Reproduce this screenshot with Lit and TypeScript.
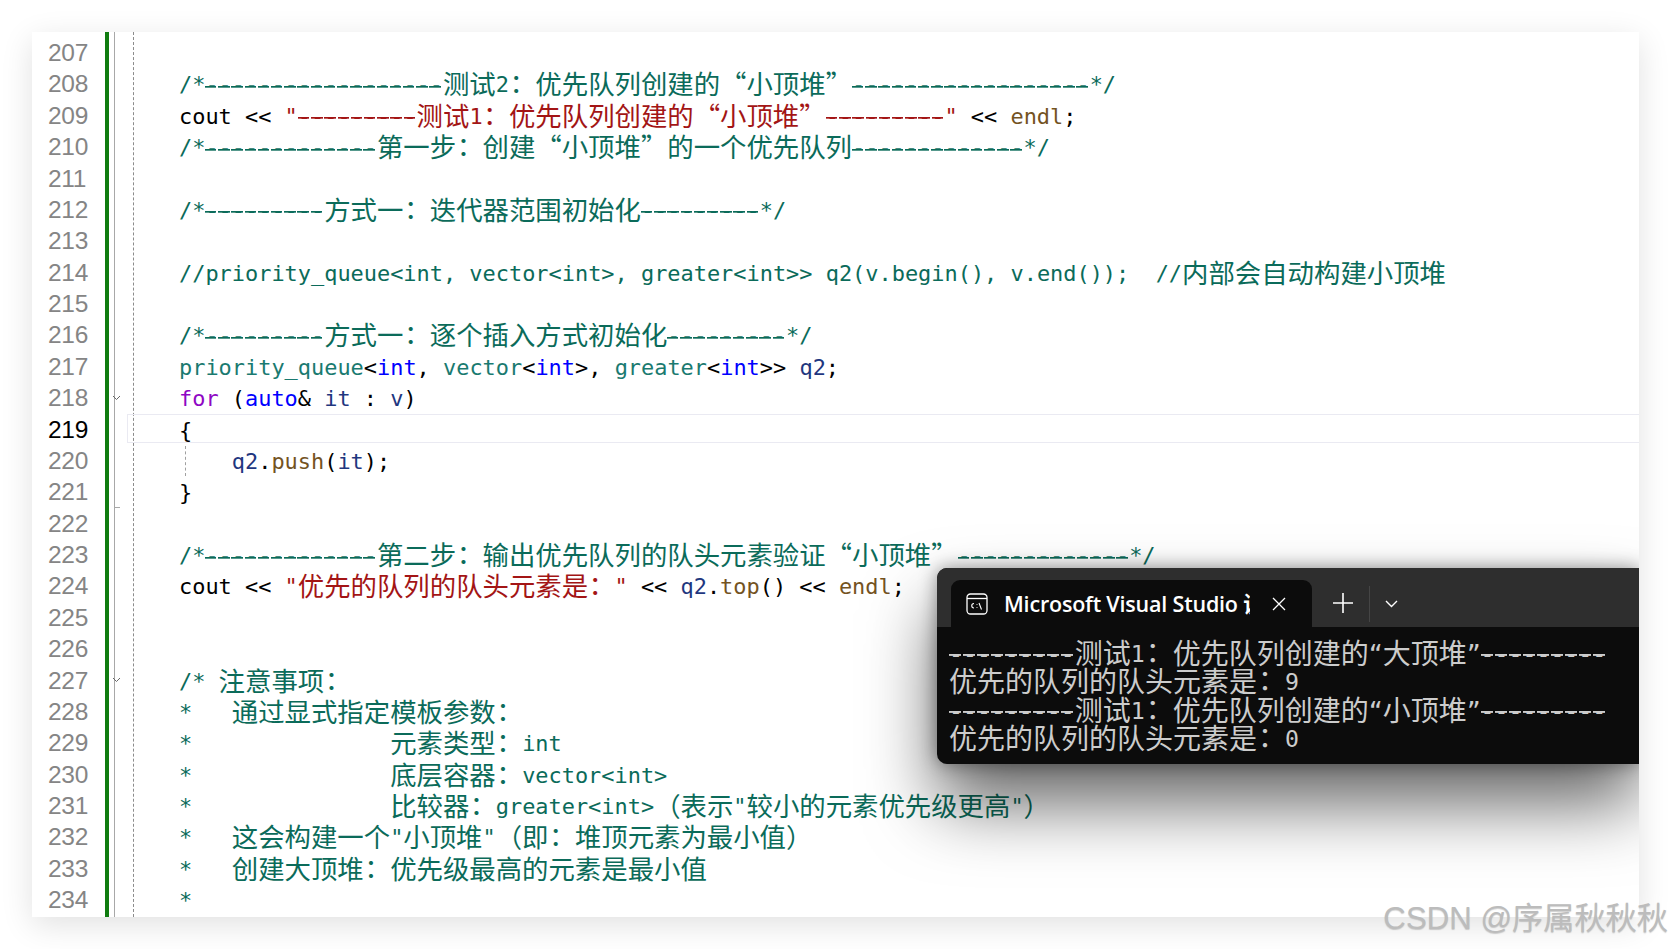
import { LitElement, html, css, svg } from "lit";
import { customElement } from "lit/decorators.js";

type Seg = [string, string];
const c = (t: string): Seg[] => [["cm", t]];
const D9 = "---------", D13 = "-------------", D18 = "------------------";

const LINES: Seg[][] = [
  [],
  c(`/*${D18}测试2：优先队列创建的“小顶堆”${D18}*/`),
  [["tx", "cout << "], ["st", `"${D9}测试1：优先队列创建的“小顶堆”${D9}"`], ["tx", " << "], ["fn", "endl"], ["tx", ";"]],
  c(`/*${D13}第一步：创建“小顶堆”的一个优先队列${D13}*/`),
  [],
  c(`/*${D9}方式一：迭代器范围初始化${D9}*/`),
  [],
  c("//priority_queue<int, vector<int>, greater<int>> q2(v.begin(), v.end());  //内部会自动构建小顶堆"),
  [],
  c(`/*${D9}方式一：逐个插入方式初始化${D9}*/`),
  [["ty", "priority_queue"], ["tx", "<"], ["kw", "int"], ["tx", ", "], ["ty", "vector"], ["tx", "<"], ["kw", "int"], ["tx", ">, "], ["ty", "greater"], ["tx", "<"], ["kw", "int"], ["tx", ">> "], ["va", "q2"], ["tx", ";"]],
  [["fl", "for"], ["tx", " ("], ["kw", "auto"], ["tx", "& "], ["va", "it"], ["tx", " : "], ["va", "v"], ["tx", ")"]],
  [["tx", "{"]],
  [["tx", "    "], ["va", "q2"], ["tx", "."], ["fn", "push"], ["tx", "("], ["va", "it"], ["tx", ");"]],
  [["tx", "}"]],
  [],
  c(`/*${D13}第二步：输出优先队列的队头元素验证“小顶堆”${D13}*/`),
  [["tx", "cout << "], ["st", `"优先的队列的队头元素是："`], ["tx", " << "], ["va", "q2"], ["tx", "."], ["fn", "top"], ["tx", "() << "], ["fn", "endl"], ["tx", ";"]],
  [],
  [],
  c("/* 注意事项："),
  c("*   通过显式指定模板参数："),
  c("*               元素类型：int"),
  c("*               底层容器：vector<int>"),
  c('*               比较器：greater<int>（表示"较小的元素优先级更高"）'),
  c('*   这会构建一个"小顶堆"（即：堆顶元素为最小值）'),
  c("*   创建大顶堆：优先级最高的元素是最小值"),
  c("*"),
];

const TERM = [
  `${D9}测试1：优先队列创建的“大顶堆”${D9}`,
  "优先的队列的队头元素是：9",
  `${D9}测试1：优先队列创建的“小顶堆”${D9}`,
  "优先的队列的队头元素是：0",
];

function runs(text: string, quotesWide: boolean) {
  const re = quotesWide
    ? /(-{2,})|(：)|([^\x00-\x7f：]+)|([\x00-\x7f]+?(?=-{2,}|[^\x00-\x7f]|$))/g
    : /(-{2,})|(：)|([^\x00-\x7f：“”]+)|((?:[\x00-\x7f“”])+?(?=-{2,}|[^\x00-\x7f“”]|$))/g;
  const out: unknown[] = [];
  for (const m of text.matchAll(re)) {
    if (m[1]) out.push(html`<span class="d">${m[1]}</span>`);
    else if (m[2]) out.push(html`<span class="p">${m[2]}</span>`);
    else if (m[3]) out.push(html`<span class="h">${m[3]}</span>`);
    else out.push(m[4]);
  }
  return out;
}

@customElement("app-root")
export class AppRoot extends LitElement {
  static styles = css`
    :host { display: block; width: 1671px; height: 949px; position: relative; overflow: hidden; background: #fff; }
    .page { padding: 32px; box-sizing: border-box; height: 949px; }
    .card { position: relative; height: 885px; overflow: hidden; background: #fff; display: flex; }
    .shadow { box-shadow: 0 8px 30px rgba(0,0,0,.12); }
    .nums { width: 73px; padding: 5px 0 0 16px; box-sizing: border-box; flex: none;
      font: 24.5px/31.39px "Liberation Sans", sans-serif; letter-spacing: -.3px; color: #858585; }
    .nums div { height: 31.39px; }
    .nums .cur { color: #000; }
    .green { width: 4px; flex: none; background: #107c10; }
    .margin { width: 20px; flex: none; margin-left: 5px; border-left: 1px solid #a8a8a8; box-sizing: border-box; border-right: 1px dashed #8c8c8c; position: relative; }
    .fold { position: absolute; left: -3px; width: 9px; height: 9px; color: #666; }
    .tick { position: absolute; left: 0; width: 5px; height: 1px; background: #a8a8a8; top: 475px; }
    .code { flex: 1; padding: 6px 0 0 45px; font: 21.93px/31.39px "DejaVu Sans Mono", monospace; color: #000; min-width: 0; position: relative; }
    .line { height: 31.39px; white-space: pre; }
    .h { font: 26.4px/0 "Noto Sans CJK SC", sans-serif; font-feature-settings: "fwid"; position: relative; top: 2px; }
    .p { font: 26.4px/0 "Noto Sans CJK TC", sans-serif; position: relative; left: -6px; top: 2px; }
    .d { background-image: repeating-linear-gradient(90deg, currentColor 0 11.4px, transparent 11.4px 13.2px);
      background-size: 100% 1.7px; background-repeat: no-repeat; background-position: 0 13.5px; }
    .cm { color: #0b6b5a; }
    .tx { color: #000; }
    .st { color: #a31515; }
    .kw { color: #0000ff; }
    .fl { color: #8f08c4; }
    .ty { color: #1a7a70; }
    .va { color: #1f377f; }
    .fn { color: #74531f; }
    .current { position: absolute; left: 95px; right: 0; top: 382px; height: 29px; box-sizing: border-box;
      border: 1px solid #eaeaf2; border-right: 0; }
    .guide { position: absolute; left: 153px; top: 414px; height: 30px; border-left: 1px dashed #a0a0a0; }
    .term { position: absolute; left: 905px; right: 0; top: 536px; height: 196px; border-radius: 10px 0 0 10px;
      background: #0c0c0c; box-shadow: 0 40px 70px rgba(0,0,0,.6), 0 0 18px rgba(0,0,0,.4); display: flex; flex-direction: column; }
    .strip { height: 59px; flex: none; background: #2e2e2e; border-radius: 10px 0 0 0; padding: 12px 0 0 14px; box-sizing: border-box;
      display: flex; align-items: stretch; color: #fff; }
    .tab { width: 361px; background: #0c0c0c; border-radius: 9px 9px 0 0; display: flex; align-items: center; padding: 0 0 0 15px; box-sizing: border-box; }
    .ticon { width: 22px; height: 22px; flex: none; }
    .title { width: 246px; margin-left: 16px; overflow: hidden; white-space: nowrap; flex: none;
      font: 600 21.5px/30px "Open Sans", "Noto Sans CJK SC", sans-serif; letter-spacing: -.2px; }
    .x { width: 14px; height: 14px; margin-left: 22px; flex: none; }
    .plus { width: 20px; height: 20px; margin: 13px 0 0 21px; flex: none; }
    .div { width: 1px; height: 36px; background: #454545; margin: 6px 0 0 16px; flex: none; }
    .chev { width: 13px; height: 8px; margin: 20px 0 0 15px; flex: none; }
    .tbody { padding: 13px 0 0 12px; font: 23.2px/28.3px "DejaVu Sans Mono", monospace; color: #cccccc; }
    .tbody div { height: 28.3px; white-space: pre; }
    .tbody .h, .tbody .p { font-size: 28px; line-height: 0; font-feature-settings: normal; }
    .tbody .d { background-image: repeating-linear-gradient(90deg, currentColor 0 12px, transparent 12px 14px);
      background-size: 100% 1.9px; background-position: 0 14.2px; }
    .mark { position: absolute; right: 3px; top: 898px; white-space: nowrap; color: #bcbcbc;
      font: 31.2px/42px "Liberation Sans", "Noto Sans CJK SC", sans-serif; text-shadow: 0 1px 1px rgba(120,120,120,.35); }
  `;

  render() {
    const chevron = (top: number) => svg`<svg class="fold" style="top:${top}px" viewBox="0 0 9 9" fill="none" stroke="currentColor"><path d="M1 3l3.5 3.5L8 3"/></svg>`;
    return html`
      <div class="page">
        <div class="card-wrap shadow">
          <div class="card">
            <div class="nums">${LINES.map((_, i) => html`<div class=${i + 207 === 219 ? "cur" : ""}>${i + 207}</div>`)}</div>
            <div class="green"></div>
            <div class="margin">
              ${chevron(361)}${chevron(643)}
              <div class="tick"></div>
            </div>
            <div class="code">
              ${LINES.map((l) => html`<div class="line">${l.map(([k, t]) => html`<span class=${k}>${runs(t, true)}</span>`)}</div>`)}
            </div>
            <div class="current"></div>
            <div class="guide"></div>
            <div class="term">
              <div class="strip">
                <div class="tab">
                  <svg class="ticon" viewBox="0 0 22 22" fill="none" stroke="#fff" stroke-width="1.3">
                    <rect x="1" y="1" width="20" height="20" rx="3.5"/>
                    <path d="M1 5.5h20"/>
                    <path d="M8 10.5a2.2 2.2 0 1 0 0 4.5M11 11v.8M11 14v.8M13 10l2.5 6.5" stroke-width="1.1"/>
                  </svg>
                  <div class="title">Microsoft Visual Studio 调试控制台</div>
                  <svg class="x" viewBox="0 0 14 14" stroke="#fff" stroke-width="1.3"><path d="M1 1l12 12M13 1L1 13"/></svg>
                </div>
                <svg class="plus" viewBox="0 0 20 20" stroke="#fff" stroke-width="1.6"><path d="M10 0v20M0 10h20"/></svg>
                <div class="div"></div>
                <svg class="chev" viewBox="0 0 13 8" fill="none" stroke="#fff" stroke-width="1.4"><path d="M1 1l5.5 5.5L12 1"/></svg>
              </div>
              <div class="tbody">${TERM.map((t) => html`<div>${runs(t, false)}</div>`)}</div>
            </div>
          </div>
        </div>
      </div>
      <div class="mark">CSDN @序属秋秋秋</div>
    `;
  }
}
